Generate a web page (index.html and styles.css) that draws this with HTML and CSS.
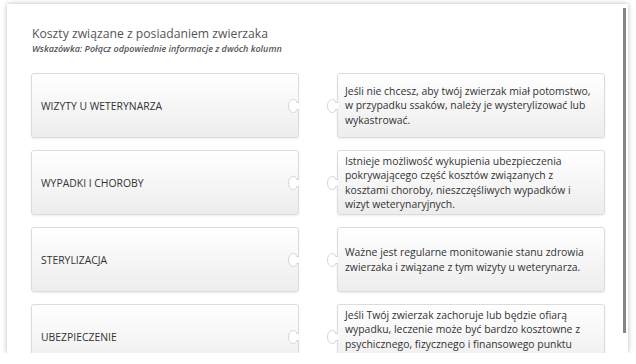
FILE: index.html
```html
<!DOCTYPE html>
<html lang="pl">
<head>
<meta charset="utf-8">
<title>Koszty związane z posiadaniem zwierzaka</title>
<link rel="stylesheet" href="styles.css">
</head>
<body>
<div class="panel">
  <div class="header">
    <h1 class="title">Koszty związane z posiadaniem zwierzaka</h1>
    <p class="hint">Wskazówka: Połącz odpowiednie informacje z dwóch kolumn</p>
  </div>
  <div class="columns">
    <div class="col">
      <div class="piece left"><span>WIZYTY U WETERYNARZA</span>
        <svg class="socket" viewBox="0 0 12 16" width="12" height="16"><path d="M12 4.5H9.6C9.6 4.5 9.6 1.5 6.6 1.5C3.6 1.5 1.5 4.2 1.5 8C1.5 11.8 3.6 14.5 6.6 14.5C9.6 14.5 9.6 11.5 9.6 11.5H12"/></svg>
      </div>
      <div class="piece left"><span>WYPADKI I CHOROBY</span>
        <svg class="socket" viewBox="0 0 12 16" width="12" height="16"><path d="M12 4.5H9.6C9.6 4.5 9.6 1.5 6.6 1.5C3.6 1.5 1.5 4.2 1.5 8C1.5 11.8 3.6 14.5 6.6 14.5C9.6 14.5 9.6 11.5 9.6 11.5H12"/></svg>
      </div>
      <div class="piece left"><span>STERYLIZACJA</span>
        <svg class="socket" viewBox="0 0 12 16" width="12" height="16"><path d="M12 4.5H9.6C9.6 4.5 9.6 1.5 6.6 1.5C3.6 1.5 1.5 4.2 1.5 8C1.5 11.8 3.6 14.5 6.6 14.5C9.6 14.5 9.6 11.5 9.6 11.5H12"/></svg>
      </div>
      <div class="piece left"><span>UBEZPIECZENIE</span>
        <svg class="socket" viewBox="0 0 12 16" width="12" height="16"><path d="M12 4.5H9.6C9.6 4.5 9.6 1.5 6.6 1.5C3.6 1.5 1.5 4.2 1.5 8C1.5 11.8 3.6 14.5 6.6 14.5C9.6 14.5 9.6 11.5 9.6 11.5H12"/></svg>
      </div>
    </div>
    <div class="col">
      <div class="piece right"><span>Jeśli nie chcesz, aby twój zwierzak miał potomstwo, w przypadku ssaków, należy je wysterylizować lub wykastrować.</span>
        <svg class="tab" viewBox="0 0 12 16" width="12" height="16"><path d="M12 4.5H9.6C9.6 4.5 9.6 1.5 6.6 1.5C3.6 1.5 1.5 4.2 1.5 8C1.5 11.8 3.6 14.5 6.6 14.5C9.6 14.5 9.6 11.5 9.6 11.5H12"/></svg>
      </div>
      <div class="piece right"><span>Istnieje możliwość wykupienia ubezpieczenia pokrywającego część kosztów związanych z kosztami choroby, nieszczęśliwych wypadków i wizyt weterynaryjnych.</span>
        <svg class="tab" viewBox="0 0 12 16" width="12" height="16"><path d="M12 4.5H9.6C9.6 4.5 9.6 1.5 6.6 1.5C3.6 1.5 1.5 4.2 1.5 8C1.5 11.8 3.6 14.5 6.6 14.5C9.6 14.5 9.6 11.5 9.6 11.5H12"/></svg>
      </div>
      <div class="piece right"><span>Ważne jest regularne monitowanie stanu zdrowia zwierzaka i związane z tym wizyty u weterynarza.</span>
        <svg class="tab" viewBox="0 0 12 16" width="12" height="16"><path d="M12 4.5H9.6C9.6 4.5 9.6 1.5 6.6 1.5C3.6 1.5 1.5 4.2 1.5 8C1.5 11.8 3.6 14.5 6.6 14.5C9.6 14.5 9.6 11.5 9.6 11.5H12"/></svg>
      </div>
      <div class="piece right"><span>Jeśli Twój zwierzak zachoruje lub będzie ofiarą wypadku, leczenie może być bardzo kosztowne z psychicznego, fizycznego i finansowego punktu widzenia.</span>
        <svg class="tab" viewBox="0 0 12 16" width="12" height="16"><path d="M12 4.5H9.6C9.6 4.5 9.6 1.5 6.6 1.5C3.6 1.5 1.5 4.2 1.5 8C1.5 11.8 3.6 14.5 6.6 14.5C9.6 14.5 9.6 11.5 9.6 11.5H12"/></svg>
      </div>
    </div>
  </div>
  <div class="scrollbar"></div>
</div>
</body>
</html>
```

FILE: styles.css
```css
* { box-sizing: border-box; }
html, body { margin: 0; padding: 0; background: #fff; }
body {
  font-family: "Open Sans", "Liberation Sans", sans-serif;
  color: #333;
  padding: 4px 8px 0 7px;
}
.panel {
  position: relative;
  height: 349px;
  background: #fff;
  box-shadow: 0 0 5px rgba(0, 0, 0, 0.28);
  overflow: hidden;
  padding: 21px 23px 0 24px;
}
.header { padding-left: 1px; }
.title {
  margin: 0;
  font-size: 12.2px;
  font-weight: 400;
  line-height: 17px;
  color: #555;
}
.hint {
  margin: 0;
  font-size: 9px;
  font-style: italic;
  font-weight: 600;
  line-height: 13px;
  color: #555;
}
.columns {
  display: flex;
  gap: 38px;
  margin-top: 18px;
}
.col {
  width: 268px;
  display: flex;
  flex-direction: column;
  gap: 12px;
}
.piece {
  position: relative;
  min-height: 65px;
  display: flex;
  align-items: center;
  border: 1px solid #dcdcdc;
  border-radius: 3px;
  background: linear-gradient(#fff, #ededed);
  box-shadow: 0 1px 2px rgba(0, 0, 0, 0.08);
  font-size: 10.4px;
  color: #333;
}
.piece.left { padding: 0 30px 0 9px; }
.piece.right { padding: 3px 10px 3px 7px; line-height: 14.2px; }
.piece svg {
  position: absolute;
  top: 50%;
  margin-top: -8px;
}
.piece svg path {
  fill: #fff;
  stroke: #d4d4d4;
  stroke-width: 1;
}
.socket { right: -1px; }
.tab { left: -12px; }
.tab path { fill: #f9f9f9; }
.scrollbar {
  position: absolute;
  top: 4px;
  right: 2px;
  width: 3px;
  height: 325px;
  background: #868686;
}
```
